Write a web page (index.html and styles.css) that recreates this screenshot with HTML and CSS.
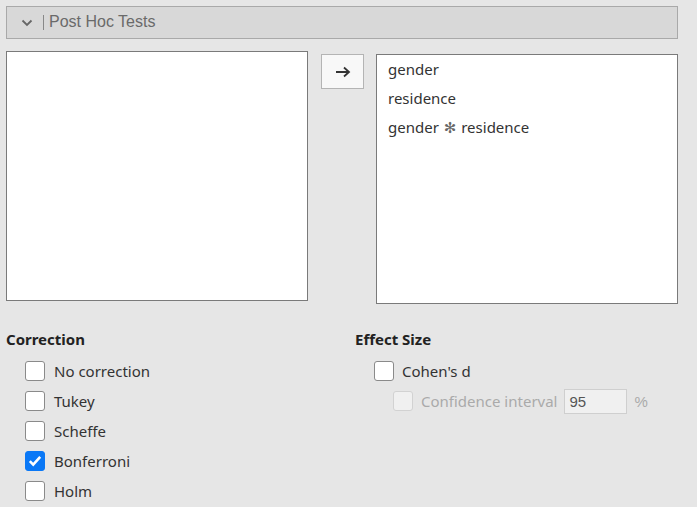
FILE: index.html
```html
<!DOCTYPE html>
<html>
<head>
<meta charset="utf-8">
<link rel="stylesheet" href="styles.css">
</head>
<body>
<div class="page">
  <div class="header">
    <svg class="chev" width="12" height="8" viewBox="0 0 12 8"><polyline points="1.5,1.5 6,6 10.5,1.5" fill="none" stroke="#666" stroke-width="1.8"/></svg>
    <span class="sep"></span>
    <span class="title">Post Hoc Tests</span>
  </div>
  <div class="lists">
    <div class="listbox left"></div>
    <button class="move">
      <svg width="16" height="12" viewBox="0 0 16 12"><path d="M1 6H14M9 1.5L14 6L9 10.5" fill="none" stroke="#333" stroke-width="1.8"/></svg>
    </button>
    <div class="listbox right">
      <div class="item">gender</div>
      <div class="item">residence</div>
      <div class="item">gender <span class="star">✻</span> residence</div>
    </div>
  </div>
  <div class="options">
    <div class="col col1">
      <div class="heading">Correction</div>
      <div class="opt"><span class="box"></span><span>No correction</span></div>
      <div class="opt"><span class="box"></span><span>Tukey</span></div>
      <div class="opt"><span class="box"></span><span>Scheffe</span></div>
      <div class="opt"><span class="box checked"><svg width="14" height="12" viewBox="0 0 14 12"><path d="M1.8 6.2L5.2 9.6L12.2 1.8" fill="none" stroke="#fff" stroke-width="2.6"/></svg></span><span>Bonferroni</span></div>
      <div class="opt"><span class="box"></span><span>Holm</span></div>
    </div>
    <div class="col col2">
      <div class="heading">Effect Size</div>
      <div class="opt"><span class="box"></span><span>Cohen's d</span></div>
      <div class="opt sub disabled"><span class="box"></span><span>Confidence interval</span><span class="num">95</span><span class="pct">%</span></div>
    </div>
  </div>
</div>
</body>
</html>
```
FILE: styles.css
```css
html, body { margin: 0; padding: 0; }
body {
  background: #e6e6e6;
  font-family: "Noto Sans", "Open Sans", sans-serif;
  color: #333;
}
.page { padding: 6px 19px 0 6px; width: 672px; }
.header {
  height: 31px;
  background: #d8d8d8;
  border: 1px solid #a9a9a9;
  display: flex;
  align-items: center;
}
.chev { margin-left: 14px; margin-top: 0; }
.sep { width: 1px; height: 15px; background: #888; margin-left: 10px; }
.title {
  margin-left: 5px;
  font-family: "Liberation Sans", Arial, sans-serif;
  font-size: 16px;
  color: #6a6a6a;
  margin-top: -1px;
}
.lists { display: flex; margin-top: 12px; align-items: flex-start; }
.listbox {
  width: 300px;
  height: 248px;
  background: #fff;
  border: 1px solid #7a7a7a;
}
.listbox.right { margin-top: 3px; margin-left: 12px; padding-top: 0; height: 248px; }
.move {
  margin-left: 13px;
  margin-top: 3px;
  width: 43px;
  height: 35px;
  background: #f8f8f8;
  border: 1px solid #b4b4b4;
  display: flex;
  align-items: center;
  justify-content: center;
  padding: 0;
}
.item { font-size: 15px; line-height: 29px; padding-left: 11px; color: #333; }
.star { font-family: "DejaVu Sans", sans-serif; font-size: 15px; color: #666; margin: 0 1px; }
.options { display: flex; margin-top: 25px; }
.col1 { width: 349px; }
.heading { font-weight: bold; font-size: 15px; color: #222; line-height: 20px; margin-bottom: 7px; }
.opt { display: flex; align-items: center; height: 30px; font-size: 15px; color: #333; }
.col1 .opt { padding-left: 19px; }
.col2 .opt { padding-left: 19px; }
.col2 .opt.sub { padding-left: 38px; }
.box {
  width: 18px;
  height: 18px;
  border: 1px solid #8a8a8a;
  border-radius: 3px;
  background: #fff;
  margin-right: 9px;
  display: flex;
  align-items: center;
  justify-content: center;
  flex: none;
}
.col2 .box { margin-right: 8px; }
.box.checked { background: #0a78f6; border-color: #0a78f6; }
.disabled { color: #aaa; }
.disabled .box { background: #f0f0f0; border-color: #d2d2d2; }
.num {
  margin-left: 6px;
  width: 56px;
  height: 23px;
  border: 1px solid #cfcfcf;
  background: #f0f0f0;
  color: #555;
  font-family: "Liberation Sans", Arial, sans-serif;
  font-size: 15px;
  padding-left: 5px;
  line-height: 23px;
}
.pct { margin-left: 8px; color: #aaa; font-family: "Liberation Sans", Arial, sans-serif; font-size: 15px; }
```
